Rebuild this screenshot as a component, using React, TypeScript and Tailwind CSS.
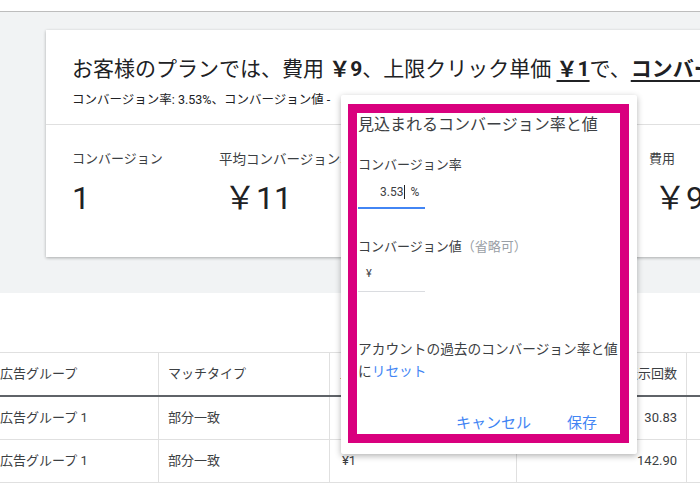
export default function App() {
  const font = { fontFamily: 'Roboto, "Noto Sans CJK JP", sans-serif' };

  const rows = [
    { group: "広告グループ 1", match: "部分一致", bid: "", imp: "30.83" },
    { group: "広告グループ 1", match: "部分一致", bid: "¥1", imp: "142.90" },
  ];

  return (
    <div className="relative w-[700px] h-[486px] overflow-hidden bg-white text-[#3c4043]" style={font}>
      <div className="h-[12px] bg-white border-b border-[#bdbdbd] shadow-[0_1px_2px_rgba(0,0,0,0.2)]" />

      <div className="bg-[#f1f3f4] h-[281px] pt-[18px] pl-[46px]">
        <div className="w-[720px] h-[227px] bg-white shadow-[0_1px_3px_rgba(0,0,0,0.3)]">
          <div className="px-[26px] pt-[26px] h-[95px] border-b border-[#e0e0e0]">
            <div className="text-[21px] leading-[26px] whitespace-nowrap text-[#202124]">
              お客様のプランでは、費用 <span className="font-bold">￥9</span>、上限クリック単価{" "}
              <span className="font-bold underline underline-offset-4">￥1</span>で、
              <span className="font-bold underline underline-offset-4">コンバージョン</span>
            </div>
            <div className="mt-[11px] text-[12.5px] leading-[14px] whitespace-nowrap text-[#202124]">
              コンバージョン率: 3.53%、コンバージョン値 -
            </div>
          </div>
          <div className="flex pl-[26px] pt-[25px]">
            <div className="w-[147px]">
              <div className="text-[13px] leading-[18px]">コンバージョン</div>
              <div className="mt-[12px] text-[32px] leading-[36px] text-[#202124]">1</div>
            </div>
            <div className="w-[150px]">
              <div className="text-[13.5px] leading-[18px] whitespace-nowrap">平均コンバージョン単価</div>
              <div className="mt-[12px] ml-[5px] text-[32px] leading-[36px] text-[#202124]">￥11</div>
            </div>
            <div className="w-[280px]" />
            <div>
              <div className="text-[13px] leading-[18px] whitespace-nowrap">費用</div>
              <div className="mt-[12px] ml-[5px] text-[32px] leading-[36px] text-[#202124]">￥9</div>
            </div>
          </div>
        </div>
      </div>

      <div className="pt-[59px] -ml-[4px] text-[13px]">
        <div className="grid grid-cols-[163px_171px_187px_170px_60px] border-t border-[#e0e0e0] border-b-2 border-b-[#5f6368] h-[45px]">
          <div className="flex items-center pl-[4px] border-r border-[#e0e0e0]">広告グループ</div>
          <div className="flex items-center pl-[9px] border-r border-[#e0e0e0]">マッチタイプ</div>
          <div className="flex items-center pl-[10px] border-r border-[#e0e0e0]">上限クリック単価</div>
          <div className="flex items-center justify-end pr-[9px] border-r border-[#e0e0e0]">表示回数</div>
          <div />
        </div>
        {rows.map((r, i) => (
          <div key={i} className="grid grid-cols-[163px_171px_187px_170px_60px] border-b border-[#e0e0e0] h-[43px]">
            <div className="flex items-center pl-[4px] border-r border-[#e0e0e0]">{r.group}</div>
            <div className="flex items-center pl-[9px] border-r border-[#e0e0e0]">{r.match}</div>
            <div className="flex items-center pl-[12px] border-r border-[#e0e0e0]">{r.bid}</div>
            <div className="flex items-center justify-end pr-[9px] border-r border-[#e0e0e0]">{r.imp}</div>
            <div />
          </div>
        ))}
      </div>

      <div className="absolute left-[341px] top-[95px] w-[296px] h-[359px] bg-white shadow-[0_2px_6px_rgba(0,0,0,0.3)] rounded-[2px] pt-[9px] pl-[7px]">
        <div className="w-[281px] h-[339px] border-[9px] border-[#d9007e] bg-white flex flex-col pl-[1px] pr-[2px]">
          <div className="text-[16px] leading-[20px] mt-[2px] whitespace-nowrap">見込まれるコンバージョン率と値</div>
          <div className="text-[13px] leading-[18px] mt-[21px]">コンバージョン率</div>
          <div className="w-[67px] h-[30px] mt-[5px] border-b-2 border-[#4285f4] flex items-center text-[12px] pl-[22px] pb-[2px]">
            <span>3.53</span>
            <span className="w-px h-[14px] bg-[#202124] ml-[1px] mr-[5px]" />
            <span>%</span>
          </div>
          <div className="text-[13px] leading-[18px] mt-[29px] whitespace-nowrap">
            コンバージョン値<span className="text-[#9aa0a6]">（省略可）</span>
          </div>
          <div className="w-[67px] h-[30px] mt-[6px] border-b border-[#dadce0] flex items-center text-[11px] pl-[8px] pb-[4px]">¥</div>
          <div className="text-[13.7px] leading-[22px] mt-[46px] whitespace-nowrap">
            <div>アカウントの過去のコンバージョン率と値</div>
            <div>
              に<span className="text-[#4285f4]">リセット</span>
            </div>
          </div>
          <div className="flex justify-end gap-[36px] pr-[21px] mt-[30px] text-[15px] text-[#4285f4]">
            <span>キャンセル</span>
            <span>保存</span>
          </div>
        </div>
      </div>
    </div>
  );
}
